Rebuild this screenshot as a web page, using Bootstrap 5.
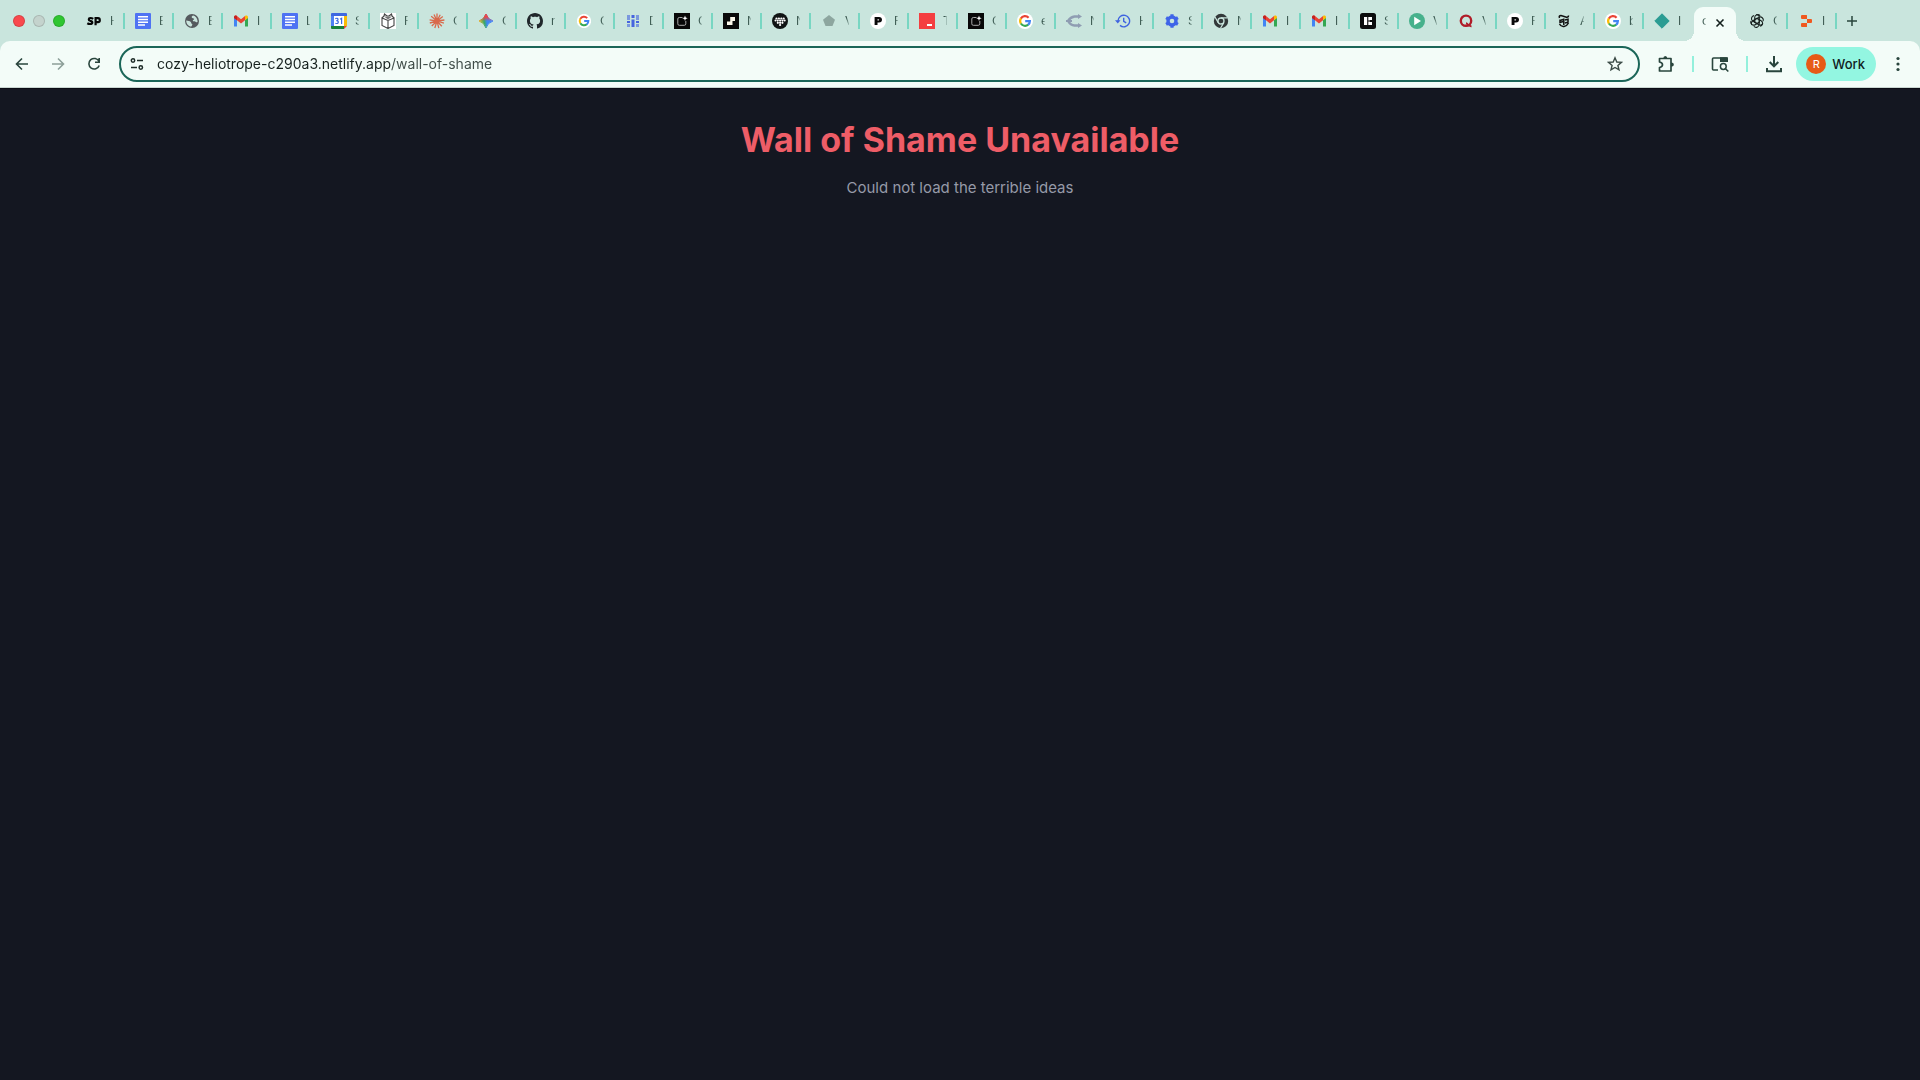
<!DOCTYPE html>
<html lang="en">
<head>
<meta charset="utf-8">
<meta name="viewport" content="width=device-width, initial-scale=1">
<title>Wall of Shame</title>
<link href="https://cdn.jsdelivr.net/npm/bootstrap@5.3.0/dist/css/bootstrap.min.css" rel="stylesheet">
<style>
  body { background: #141721; font-family: Inter, "Liberation Sans", sans-serif; }
  .tabstrip { background: #c9e5dd; height: 41px; }
  .lights { gap: 8px; padding: 0 11px 0 13px; height: 41px; }
  .light { width: 12px; height: 12px; border-radius: 50%; border: 1px solid #0002; }
  .light-close { background: #f9494d; }
  .light-min { background: #c4d3cd; }
  .light-max { background: #2fc631; }
  .tab { width: 49px; height: 42px; padding: 0 0 0 10px; color: #26443c; font-size: 12px; line-height: 16px; text-decoration: none; }
  .tab svg { width: 16px; height: 16px; flex: none; }
  .tab-title { width: 4px; margin-left: 8px; overflow: hidden; white-space: nowrap; -webkit-mask-image: linear-gradient(90deg, #000 25%, #0003); mask-image: linear-gradient(90deg, #000 25%, #0003); }
  .tab-rule { width: 2px; height: 16px; background: #78d6c2; }
  .tab-active { position: relative; width: 42px; height: 34px; margin: 7px 3px 0 1px; background: #f3fcf8; border-radius: 9px 9px 0 0; }
  .tab-active::before, .tab-active::after { content: ""; position: absolute; bottom: 0; width: 10px; height: 10px; }
  .tab-active::before { right: 100%; background: radial-gradient(circle at 0 0, transparent 10px, #f3fcf8 10px); }
  .tab-active::after { left: 100%; background: radial-gradient(circle at 100% 0, transparent 10px, #f3fcf8 10px); }
  .tab-active .tab { width: 12px; height: 28px; padding: 0; }
  .tool { background: none; border: 0; padding: 0; color: #29453d; display: inline-flex; align-items: center; justify-content: center; }
  .tab-close { width: 16px; height: 16px; margin-left: 6px; }
  .tab-new { width: 30px; height: 41px; }
  .corners { background: #c9e5dd; }
  .toolbar { background: #f3fcf8; height: 47px; padding: 0 4px; border-bottom: 1px solid #c9d6d1; border-radius: 10px 10px 0 0; }
  .tool-nav { width: 36px; height: 36px; }
  .omnibox { height: 36px; margin-left: 7px; padding: 0 15px 0 6px; border: 2px solid #1b6658; border-radius: 18px; }
  .url { border: 0; outline: 0; padding: 0 0 0 10px; font-size: 14px; line-height: 20px; color: transparent; background: linear-gradient(90deg, #17221f 244px, #3f4c48 244px); -webkit-background-clip: text; background-clip: text; }
  .tool-rule { width: 2px; height: 16px; background: #93f0dc; }
  .profile { height: 34px; padding: 0 11px 0 10px; gap: 6px; border: 0; border-radius: 17px; background: #93f6e1; color: #10201c; font-size: 13px; line-height: 20px; font-weight: 500; }
  .avatar { width: 20px; height: 20px; border-radius: 50%; background: #e65b16; color: #fff; font-size: 11px; line-height: 20px; text-align: center; font-weight: 400; }
  .edge { border-top: 1px solid #0a0c14; padding-top: 31px; }
  .notice-title { color: #ee5d67; font-size: 34px; line-height: 40px; font-weight: 700; margin-bottom: 16px; }
  .notice-text { color: #969aa8; font-size: 15px; line-height: 24px; }
</style>
<script src="https://cdn.jsdelivr.net/npm/bootstrap@5.3.0/dist/js/bootstrap.bundle.min.js"></script>
</head>
<body>
<svg width="0" height="0" class="d-none" aria-hidden="true">
  <symbol id="docs" viewBox="0 0 16 16"><rect width="16" height="16" rx="1" fill="#4f73f3"/><path d="M3 3.800h10M3 6.500h10M3 9.200h10M3 11.900h7" stroke="#fff" stroke-width="1.500"/></symbol>
  <symbol id="globe" viewBox="0 0 16 16"><circle cx="8" cy="8" r="7" fill="#555a5e"/><path d="M2.200 7.500c2 .2 3.500.4 4.600 1.500.8.8.2 1.900 1.400 2 .4.900-.3 1.700-.9 2.600C4.500 13.400 2.300 11 2.200 7.500zM9 2.400c-1.200.6-1.500 1.100-1.200 2 .4 1 1.900.4 2.300 1.400.4 1.100-1.600 1-1.300 2 .4 1 2.200.3 3.100 1.200.5.6 1 .4 1.700-.2C13.700 5.800 11.800 3 9 2.400z" fill="#c9e5dd"/></symbol>
  <symbol id="gmail" viewBox="0 0 16 16"><path d="M1 4.500v9h3V7z" fill="#4285f4"/><path d="M15 4.500v9h-3V7z" fill="#34a853"/><path d="M1 4.200C1 2.500 2.900 2 4 3l4 3.200L12 3v4.200l-4 3.200-4-3.200-3-2.200z" fill="#ea4335"/><path d="M12 3c1.200-1 3-.4 3 1.200V5l-3 2.300z" fill="#fbbc04"/><path d="M1 4.200C1 2.600 2.800 2 4 3v4.200L1 5z" fill="#c5221f"/></symbol>
  <symbol id="google" viewBox="0 0 16 16"><circle cx="8" cy="8" r="8" fill="#fff"/><g fill="none" stroke-width="2.200"><path d="M3.800 5.600A4.900 4.900 0 0 1 11.600 4.700" stroke="#ea4335"/><path d="M3.900 5.400a5 5 0 0 0 0 5.200" stroke="#fbbc05"/><path d="M3.900 10.500a4.900 4.900 0 0 0 7.300 1.200" stroke="#34a853"/><path d="M11.100 11.800c1.300-1 1.800-2.300 1.800-3.700H8.200" stroke="#4285f4"/></g></symbol>
  <symbol id="boxplus" viewBox="0 0 16 16"><rect width="16" height="16" fill="#080808"/><path d="M8.500 4.500H5.300Q3.800 4.500 3.800 6v4.800q0 1.500 1.500 1.500h5q1.500 0 1.500-1.500V8" fill="none" stroke="#aaa"/><path d="M11 2.500l.7 2 2 .7-2 .7-.7 2-.7-2-2-.7 2-.7z" fill="#fff"/></symbol>
  <symbol id="pcircle" viewBox="0 0 16 16"><circle cx="8" cy="8" r="8" fill="#fff"/><path fill-rule="evenodd" d="M4.600 4H9c2 0 3 1.200 3 2.800S11 9.600 9 9.600H7.500V12H4.600zM7.500 6.200v1.300h1c.9 0 .9-1.300 0-1.300z" fill="#0a0a0a"/></symbol>
</svg>

<header>
  <nav class="tabstrip d-flex" aria-label="Tabs">
    <div class="lights d-flex align-items-center"><span class="light light-close"></span><span class="light light-min"></span><span class="light light-max"></span></div>
    <a href="#" class="tab d-flex align-items-center" aria-label="Tab"><svg viewBox="0 0 16 16"><path d="M7.200 5.900Q6 5 4.400 5C2.300 5 2.300 7.300 4.200 7.800 7.300 8.400 6.700 11 4.200 11Q2.600 11 1.300 10.200M9.600 12.200V5.200h2.400c2.400 0 2.400 3.900 0 3.900H9.800" fill="none" stroke="#060606" stroke-width="2.200"/></svg><span class="tab-title">H</span><span class="tab-rule ms-auto"></span></a>
    <a href="#" class="tab d-flex align-items-center" aria-label="Tab"><svg><use href="#docs"/></svg><span class="tab-title">E</span><span class="tab-rule ms-auto"></span></a>
    <a href="#" class="tab d-flex align-items-center" aria-label="Tab"><svg><use href="#globe"/></svg><span class="tab-title">E</span><span class="tab-rule ms-auto"></span></a>
    <a href="#" class="tab d-flex align-items-center" aria-label="Tab"><svg><use href="#gmail"/></svg><span class="tab-title">I</span><span class="tab-rule ms-auto"></span></a>
    <a href="#" class="tab d-flex align-items-center" aria-label="Tab"><svg><use href="#docs"/></svg><span class="tab-title">L</span><span class="tab-rule ms-auto"></span></a>
    <a href="#" class="tab d-flex align-items-center" aria-label="Tab"><svg viewBox="0 0 16 16"><path d="M0 1q0-1 1-1h14q1 0 1 1v2H0z" fill="#3f68e0"/><path d="M0 3h3v10H0z" fill="#4f80f2"/><path d="M13 3h3v10h-3z" fill="#fbbc04"/><path d="M0 13h13v3H1q-1 0-1-1z" fill="#188038"/><path d="M13 13h3l-3 3z" fill="#ea4335"/><path d="M3 3h10v10H3z" fill="#fff"/><path d="M4.300 5.600q2.700-1 2.700.8 0 1.200-1.700 1.300 2 0 2 1.400 0 2-3 1.100M9 6.200l1.600-.9v5.700" fill="none" stroke="#3c6be0" stroke-width="1.200"/></svg><span class="tab-title">S</span><span class="tab-rule ms-auto"></span></a>
    <a href="#" class="tab d-flex align-items-center" aria-label="Tab"><svg viewBox="0 0 16 16"><path d="M0 0h16v16H0z" fill="#fff"/><path d="M2 5l6 2.500L14 5v7.500L8 15.500l-6-3zM8 7.500v8M2 5l2-2 .5-2L7 3h2l2.500-2 .5 2 2 2" fill="#fff" stroke="#444" stroke-width="1.100"/><path d="M4 3.500h8L8 6.500z" fill="#777"/></svg><span class="tab-title">F</span><span class="tab-rule ms-auto"></span></a>
    <a href="#" class="tab d-flex align-items-center" aria-label="Tab"><svg viewBox="0 0 16 16"><path d="M8 8V.6M8 8l3.200-6.300M8 8l5.800-4.500M8 8l7.400-1M8 8l6.900 2.200M8 8l4.800 5.200M8 8l1.800 7.200M8 8l-2.200 7M8 8l-5.200 5M8 8L.8 10M8 8L.6 6.800M8 8L2.200 3.300M8 8L5 1.500" stroke="#d9694b" stroke-width="1.300"/></svg><span class="tab-title">C</span><span class="tab-rule ms-auto"></span></a>
    <a href="#" class="tab d-flex align-items-center" aria-label="Tab"><svg viewBox="0 0 16 16"><defs><linearGradient id="gem" gradientUnits="userSpaceOnUse" x1="1" y1="10" x2="15" y2="8"><stop offset="0" stop-color="#f5b921"/><stop offset=".38" stop-color="#38a86b"/><stop offset=".58" stop-color="#3f86f5"/><stop offset="1" stop-color="#4a86f5"/></linearGradient><linearGradient id="gem2" x1="0" y1="0" x2="0" y2="1"><stop offset="0" stop-color="#f04444"/><stop offset=".2" stop-color="#f04444"/><stop offset=".5" stop-color="#f04444" stop-opacity="0"/></linearGradient></defs><path d="M8 1Q9.600 6.400 15 8 9.600 9.600 8 15 6.400 9.600 1 8 6.400 6.400 8 1z" fill="url(#gem)" stroke="url(#gem)"/><path d="M8 1Q9.600 6.400 15 8 9.600 9.600 8 15 6.400 9.600 1 8 6.400 6.400 8 1z" fill="url(#gem2)" stroke="url(#gem2)"/></svg><span class="tab-title">C</span><span class="tab-rule ms-auto"></span></a>
    <a href="#" class="tab d-flex align-items-center" aria-label="Tab"><svg viewBox="0 0 16 16"><path fill="#20272b" d="M8 0C3.580 0 0 3.580 0 8c0 3.540 2.290 6.530 5.470 7.590.4.070.55-.17.55-.38 0-.19-.01-.82-.01-1.490-2.010.37-2.530-.49-2.690-.94-.09-.23-.48-.94-.82-1.130-.28-.15-.68-.52-.01-.53.63-.01 1.080.58 1.230.82.720 1.210 1.870.87 2.330.66.070-.52.280-.87.510-1.070-1.780-.2-3.640-.89-3.640-3.950 0-.87.310-1.590.82-2.150-.08-.2-.36-1.020.08-2.120 0 0 .67-.21 2.200.82.640-.18 1.320-.27 2-.27s1.360.09 2 .27c1.530-1.040 2.200-.82 2.200-.82.440 1.100.160 1.920.080 2.120.510.560.82 1.270.82 2.150 0 3.070-1.870 3.750-3.650 3.950.290.250.540.730.540 1.480 0 1.070-.01 1.930-.01 2.200 0 .21.15.46.55.38A8.010 8.010 0 0 0 16 8c0-4.420-3.580-8-8-8z"/></svg><span class="tab-title">r</span><span class="tab-rule ms-auto"></span></a>
    <a href="#" class="tab d-flex align-items-center" aria-label="Tab"><svg viewBox="-1 -1 18 18"><use href="#google" width="16" height="16"/></svg><span class="tab-title">C</span><span class="tab-rule ms-auto"></span></a>
    <a href="#" class="tab d-flex align-items-center" aria-label="Tab"><svg viewBox="0 0 16 16"><g fill="#4664df"><path d="M6.500 2h3v3h-3zM6.500 6.500h3V14h-3zM2 8h3v2H2zM11 8h3v2h-3z"/><path d="M2 2h3v5H2zM11 2h3v5h-3zM2 11h3v3H2zM11 11h3v3h-3z" opacity=".6"/></g></svg><span class="tab-title">D</span><span class="tab-rule ms-auto"></span></a>
    <a href="#" class="tab d-flex align-items-center" aria-label="Tab"><svg><use href="#boxplus"/></svg><span class="tab-title">C</span><span class="tab-rule ms-auto"></span></a>
    <a href="#" class="tab d-flex align-items-center" aria-label="Tab"><svg viewBox="0 0 16 16"><path d="M0 0h16v16H0z" fill="#0a0a0a"/><path d="M4 12V8.500h3.200V4H12v4H9.500v4z" fill="#fbf7ea"/></svg><span class="tab-title">N</span><span class="tab-rule ms-auto"></span></a>
    <a href="#" class="tab d-flex align-items-center" aria-label="Tab"><svg viewBox="0 0 16 16"><circle cx="8" cy="8" r="8" fill="#101414"/><g fill="#fff"><circle cx="4.500" cy="5.500" r="1.100"/><circle cx="6.900" cy="5.500" r="1.100"/><circle cx="9.300" cy="5.500" r="1.100"/><circle cx="11.700" cy="5.500" r="1.100"/><circle cx="3.500" cy="7.600" r="1"/><circle cx="5.700" cy="7.600" r="1.100"/><circle cx="8.100" cy="7.600" r="1.100"/><circle cx="10.500" cy="7.600" r="1.100"/><circle cx="12.700" cy="7.600" r="1"/><circle cx="5.800" cy="9.800" r="1.100"/><circle cx="8.100" cy="9.800" r="1.100"/><circle cx="10.400" cy="9.800" r="1.100"/><circle cx="8.100" cy="12" r="1.100"/></g></svg><span class="tab-title">N</span><span class="tab-rule ms-auto"></span></a>
    <a href="#" class="tab d-flex align-items-center" aria-label="Tab"><svg viewBox="0 0 16 16"><path d="M8 2l6 4.700L11.500 13h-7L2 6.700z" fill="#8da69f"/></svg><span class="tab-title">V</span><span class="tab-rule ms-auto"></span></a>
    <a href="#" class="tab d-flex align-items-center" aria-label="Tab"><svg><use href="#pcircle"/></svg><span class="tab-title">F</span><span class="tab-rule ms-auto"></span></a>
    <a href="#" class="tab d-flex align-items-center" aria-label="Tab"><svg viewBox="0 0 16 16"><path d="M0 0h16v16H0z" fill="#f43e40"/><path d="M8 11h5v2H8z" fill="#fff"/></svg><span class="tab-title">T</span><span class="tab-rule ms-auto"></span></a>
    <a href="#" class="tab d-flex align-items-center" aria-label="Tab"><svg><use href="#boxplus"/></svg><span class="tab-title">C</span><span class="tab-rule ms-auto"></span></a>
    <a href="#" class="tab d-flex align-items-center" aria-label="Tab"><svg><use href="#google"/></svg><span class="tab-title">e</span><span class="tab-rule ms-auto"></span></a>
    <a href="#" class="tab d-flex align-items-center" aria-label="Tab"><svg viewBox="0 0 16 16"><path d="M13 3.500H8.500Q4.500 4 2 7.800 4.500 12 8.500 12.500H13" fill="none" stroke="#8f9db2" stroke-width="2.400"/><path d="M12 1l4 2.500L12 6zM12 10l4 2.500-4 2.500zM0 7h6v2H0z" fill="#8f9db2"/></svg><span class="tab-title">N</span><span class="tab-rule ms-auto"></span></a>
    <a href="#" class="tab d-flex align-items-center" aria-label="Tab"><svg viewBox="0 0 16 16"><path d="M3 8a5.800 5.800 0 1 1 2 4.400M8.700 4.800v3.600l2.500 1.500" fill="none" stroke="#3f64e0" stroke-width="1.400"/><path d="M0 7.300h5.500L2.800 10.400z" fill="#3f64e0"/></svg><span class="tab-title">H</span><span class="tab-rule ms-auto"></span></a>
    <a href="#" class="tab d-flex align-items-center" aria-label="Tab"><svg viewBox="0 0 16 16"><circle cx="8" cy="8" r="4" fill="none" stroke="#3f64e8" stroke-width="3.400"/><path d="M8 1.200v2M8 12.800v2M2.100 4.600l1.700 1M12.200 10.400l1.700 1M2.100 11.400l1.700-1M12.200 5.600l1.700-1" stroke="#3f64e8" stroke-width="3.200"/></svg><span class="tab-title">S</span><span class="tab-rule ms-auto"></span></a>
    <a href="#" class="tab d-flex align-items-center" aria-label="Tab"><svg viewBox="0 0 16 16"><circle cx="8" cy="8" r="7.200" fill="#33393a"/><circle cx="8" cy="8" r="3" fill="#33393a" stroke="#c9e5dd" stroke-width="1.300"/><path d="M8 4.800h6.500M5.200 9.600L2 4M10.800 9.600L7.500 15.200" stroke="#c9e5dd" stroke-width="1.200"/></svg><span class="tab-title">N</span><span class="tab-rule ms-auto"></span></a>
    <a href="#" class="tab d-flex align-items-center" aria-label="Tab"><svg><use href="#gmail"/></svg><span class="tab-title">I</span><span class="tab-rule ms-auto"></span></a>
    <a href="#" class="tab d-flex align-items-center" aria-label="Tab"><svg><use href="#gmail"/></svg><span class="tab-title">I</span><span class="tab-rule ms-auto"></span></a>
    <a href="#" class="tab d-flex align-items-center" aria-label="Tab"><svg viewBox="0 0 16 16"><rect width="16" height="16" rx="2.500" fill="#0c0d0e"/><path d="M4 4h3.200v8H4zM8.300 4H12v3H8.300zM8.300 9H12v3H8.300zM8.300 7.400h1.500v1.200H8.300z" fill="#fff"/></svg><span class="tab-title">S</span><span class="tab-rule ms-auto"></span></a>
    <a href="#" class="tab d-flex align-items-center" aria-label="Tab"><svg viewBox="0 0 16 16"><circle cx="8" cy="8" r="8" fill="#47b18c"/><path d="M5.200 3.800L12 8l-6.800 4.200z" fill="#fff"/></svg><span class="tab-title">V</span><span class="tab-rule ms-auto"></span></a>
    <a href="#" class="tab d-flex align-items-center" aria-label="Tab"><svg viewBox="0 0 16 16"><ellipse cx="8" cy="7.700" rx="5.200" ry="5.100" fill="none" stroke="#b01c28" stroke-width="2.400"/><path d="M8 10.200c2 0 2.200 3.400 5.500 3" fill="none" stroke="#b01c28" stroke-width="1.900"/></svg><span class="tab-title">V</span><span class="tab-rule ms-auto"></span></a>
    <a href="#" class="tab d-flex align-items-center" aria-label="Tab"><svg><use href="#pcircle"/></svg><span class="tab-title">F</span><span class="tab-rule ms-auto"></span></a>
    <a href="#" class="tab d-flex align-items-center" aria-label="Tab"><svg viewBox="0 0 16 16"><path d="M3.500 5Q2.500 2.500 5 2.500L10.500 4.200Q12.500 4.500 12.500 2.500M7.800 5.500V12M4 7.500l3-1M4 6.500v3l3-1M3.500 11Q5 14 8 13.500T12.500 10M9 7l3-.8v3l-3 .8" fill="none" stroke="#111" stroke-width="1.500"/></svg><span class="tab-title">A</span><span class="tab-rule ms-auto"></span></a>
    <a href="#" class="tab d-flex align-items-center" aria-label="Tab"><svg><use href="#google"/></svg><span class="tab-title">b</span><span class="tab-rule ms-auto"></span></a>
    <a href="#" class="tab d-flex align-items-center" aria-label="Tab"><svg viewBox="0 0 16 16"><path d="M8 .8L15.200 8 8 15.200.8 8z" fill="#2b9c93" stroke="#2b9c93" stroke-linejoin="round"/></svg><span class="tab-title">I</span></a>
    <div class="tab-active d-flex align-items-start">
      <a href="#" class="tab d-flex align-items-center" aria-current="page" aria-label="Current tab"><span class="tab-title">c</span></a>
      <button type="button" class="tool tab-close mt-1 pt-2" aria-label="Close tab"><svg width="16" height="16" viewBox="0 0 16 16"><path d="M4.500 4.500l7 7M11.500 4.500l-7 7" stroke="#14211e" stroke-width="1.600"/></svg></button>
    </div>
    <a href="#" class="tab d-flex align-items-center" aria-label="Tab"><svg viewBox="0 0 16 16"><g fill="none" stroke="#18211f" stroke-width="1.100"><path id="petal" d="M5.700 9.400V4.600a3 3 0 0 1 5.400-1.800M5.700 6.800L9.800 4.400a3 3 0 0 1 4.300 3.700M8 5.300L3.900 7.700a3 3 0 0 0-1 4.200"/><use href="#petal" transform="rotate(120 8 8)"/><use href="#petal" transform="rotate(240 8 8)"/><path d="M8 5.300l2.300 1.300v2.700L8 10.700 5.700 9.300V6.600z"/></g></svg><span class="tab-title">C</span><span class="tab-rule ms-auto"></span></a>
    <a href="#" class="tab d-flex align-items-center" aria-label="Tab"><svg viewBox="0 0 16 16"><path d="M4 2h4.500q.5 0 .5.500V6H4q-1 0-1-1V3q0-1 1-1zM9 6h4q1 0 1 1v2q0 1-1 1H9zM4 10h5v3.500q0 .5-.5.500H4q-1 0-1-1v-2q0-1 1-1z" fill="#f0581f"/></svg><span class="tab-title">I</span><span class="tab-rule ms-auto"></span></a>
    <button type="button" class="tool tab-new" aria-label="New tab"><svg width="16" height="16" viewBox="0 0 16 16"><path d="M8 3v10M3 8h10" stroke="#29453d" stroke-width="1.500"/></svg></button>
  </nav>

  <div class="corners">
    <div class="toolbar d-flex align-items-center">
      <button type="button" class="tool tool-nav" aria-label="Back"><svg width="16" height="16" viewBox="0 0 16 16"><path d="M14 8H3M8 2.500L2.500 8 8 13.500" fill="none" stroke="currentColor" stroke-width="1.600"/></svg></button>
      <button type="button" class="tool tool-nav opacity-50" aria-label="Forward"><svg width="16" height="16" viewBox="0 0 16 16"><path d="M2 8h11M8 2.500L13.500 8 8 13.500" fill="none" stroke="currentColor" stroke-width="1.600"/></svg></button>
      <button type="button" class="tool tool-nav" aria-label="Reload"><svg width="16" height="16" viewBox="0 0 16 16"><path d="M13 5.500A5.300 5.300 0 1 0 13.200 9.500M13.200 2v4.200H9" fill="none" stroke="currentColor" stroke-width="1.600"/></svg></button>
      <form class="omnibox d-flex align-items-center flex-grow-1">
        <button type="button" class="tool" aria-label="Site information"><svg width="20" height="16" viewBox="0 0 20 16"><g fill="none" stroke="#1d2b27" stroke-width="1.500"><circle cx="6" cy="4.500" r="1.700"/><path d="M10 4.500h6M4 11.500h6"/><circle cx="13.800" cy="11.500" r="1.700"/></g></svg></button>
        <input class="url flex-grow-1" type="text" aria-label="Address" spellcheck="false" value="cozy-heliotrope-c290a3.netlify.app/wall-of-shame">
        <button type="button" class="tool" aria-label="Bookmark this page"><svg width="16" height="16" viewBox="0 0 16 16"><path d="M8 1.800l1.800 4.200 4.600.4-3.500 3 1.100 4.500L8 11.500l-4 2.400 1.100-4.500-3.500-3L6.200 6z" fill="none" stroke="#3c4c47" stroke-width="1.400"/></svg></button>
      </form>
      <div class="d-flex align-items-center">
        <button type="button" class="tool tool-nav ms-2" aria-label="Extensions"><svg width="18" height="18" viewBox="0 0 18 18"><path d="M2.500 3.500H14V16H2.500V12.500Q5.500 12 5.500 9.800T2.500 7V3.500z" fill="none" stroke="currentColor" stroke-width="1.700" stroke-linejoin="round"/><path d="M6.300 3.500Q6.300 1 8.300 1t2 2.500zM14 7.500q2.800 0 2.800 2T14 11.500z" fill="currentColor"/></svg></button>
        <span class="tool-rule mx-2"></span>
        <button type="button" class="tool tool-nav" aria-label="Search tabs"><svg width="18" height="18" viewBox="0 0 18 18"><path d="M7 15H2.500q-1 0-1-1V4q0-1 1-1H16v3" fill="none" stroke="currentColor" stroke-width="1.600"/><path d="M9 2.200h6.500q1.500 0 1.500 1.500V7H9z" fill="currentColor"/><circle cx="12.300" cy="11.500" r="2.900" fill="none" stroke="currentColor" stroke-width="1.500"/><path d="M14.300 13.500l3 3" stroke="currentColor" stroke-width="1.600"/></svg></button>
        <span class="tool-rule mx-2"></span>
        <button type="button" class="tool tool-nav" aria-label="Downloads"><svg width="18" height="18" viewBox="0 0 18 18"><path d="M9 1v10M4.700 7L9 11.300 13.300 7M2 13v3.200h14V13" fill="none" stroke="currentColor" stroke-width="2"/></svg></button>
        <button type="button" class="profile d-flex align-items-center ms-1"><span class="avatar">R</span>Work</button>
        <button type="button" class="tool tool-nav ms-1" aria-label="Menu"><svg width="16" height="16" viewBox="0 0 16 16"><g fill="currentColor"><circle cx="8" cy="2.500" r="1.600"/><circle cx="8" cy="8" r="1.600"/><circle cx="8" cy="13.500" r="1.600"/></g></svg></button>
      </div>
    </div>
  </div>
</header>

<main class="edge text-center">
  <h1 class="notice-title">Wall of Shame Unavailable</h1>
  <p class="notice-text mb-0">Could not load the terrible ideas</p>
</main>
</body>
</html>
